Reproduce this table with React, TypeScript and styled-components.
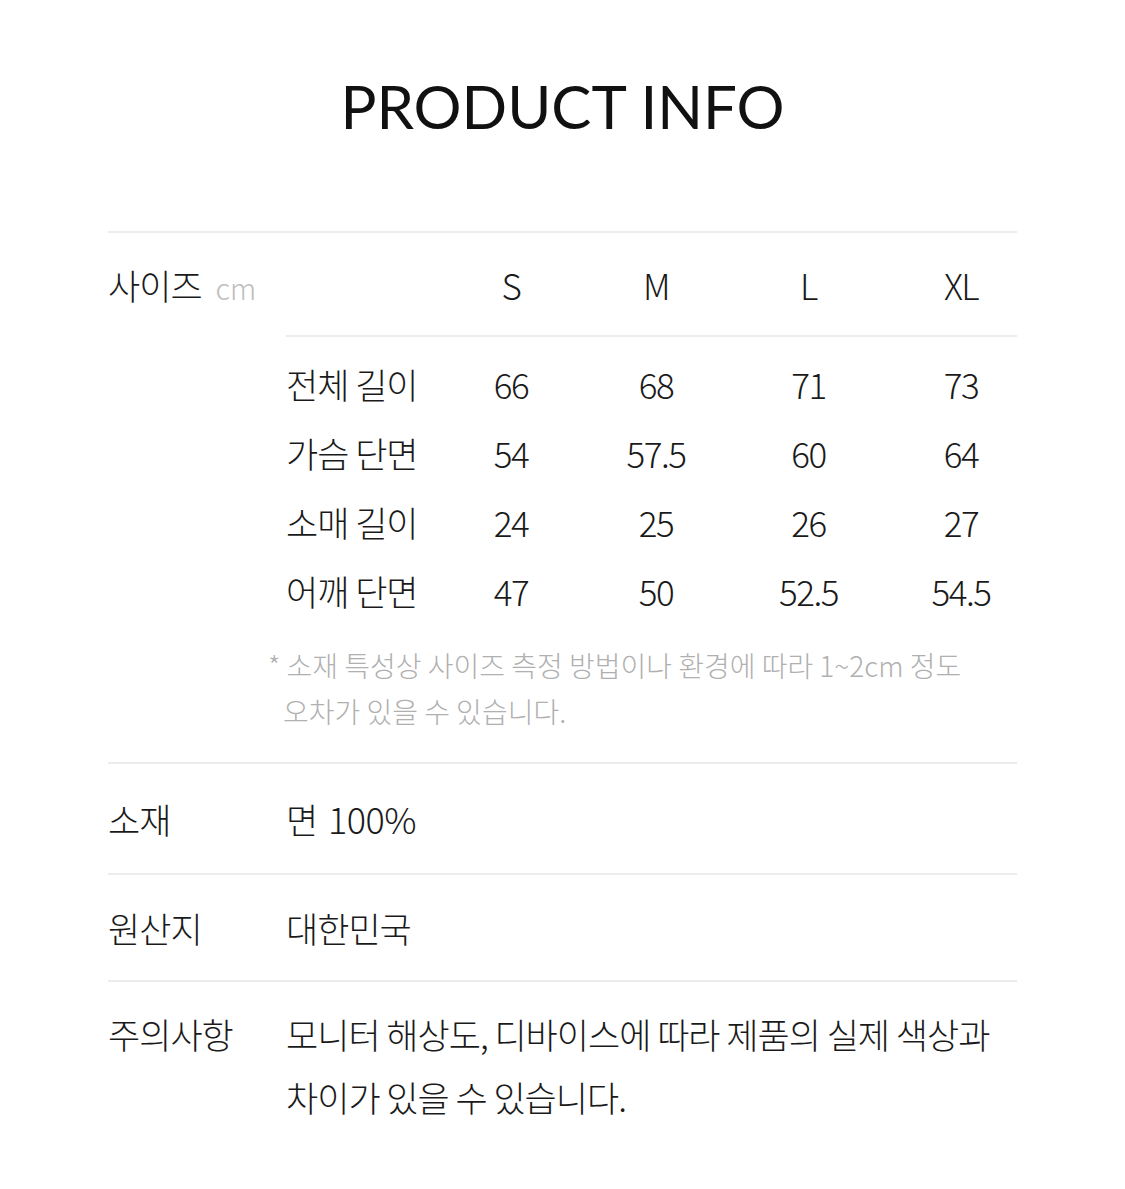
import React from 'react';
import styled, { createGlobalStyle } from 'styled-components';

/* --------------------------------- Globals -------------------------------- */
const GlobalStyle = createGlobalStyle`
  html, body {
    margin: 0;
    padding: 0;
    background: #ffffff;
  }
  body {
    font-family: 'Noto Sans CJK KR', 'Noto Sans', sans-serif;
    color: #1e1e1e;
  }
`;

/* ---------------------------------- Data ---------------------------------- */
const sizes = ['S', 'M', 'L', 'XL'];

const measures: { label: string; values: string[] }[] = [
  { label: '전체 길이', values: ['66', '68', '71', '73'] },
  { label: '가슴 단면', values: ['54', '57.5', '60', '64'] },
  { label: '소매 길이', values: ['24', '25', '26', '27'] },
  { label: '어깨 단면', values: ['47', '50', '52.5', '54.5'] },
];

const App = () => {
  return (
    <>
      <GlobalStyle />
      <Page>
        <Title>PRODUCT INFO</Title>

        <Section>
          <Label $pad={20}>
            사이즈<Unit>cm</Unit>
          </Label>
          <SizeTable>
            <HeadRow>
              <span />
              {sizes.map((s) => (
                <Value key={s}>{s}</Value>
              ))}
            </HeadRow>
            <Body>
              {measures.map((m) => (
                <DataRow key={m.label}>
                  <RowName>{m.label}</RowName>
                  {m.values.map((v, i) => (
                    <Value key={i}>{v}</Value>
                  ))}
                </DataRow>
              ))}
            </Body>
            <Note>
              * 소재 특성상 사이즈 측정 방법이나 환경에 따라 1~2cm 정도
              <br />
              오차가 있을 수 있습니다.
            </Note>
          </SizeTable>
        </Section>

        <Section>
          <Label $pad={23}>소재</Label>
          <Text $pad={23}>
            면 <Num>100%</Num>
          </Text>
        </Section>

        <Section>
          <Label $pad={21}>원산지</Label>
          <Text $pad={21}>대한민국</Text>
        </Section>

        <Section>
          <Label $pad={20}>주의사항</Label>
          <Text $pad={20}>
            모니터 해상도, 디바이스에 따라 제품의 실제 색상과
            <br />
            차이가 있을 수 있습니다.
          </Text>
        </Section>
      </Page>
    </>
  );
};

/* --------------------------------- Styles --------------------------------- */
const Page = styled.main`
  width: 909px;
  margin: 0 auto;
  padding: 75px 0 60px;
`;

const Title = styled.h1`
  margin: 0 0 94px;
  font-family: Lato, 'Open Sans', sans-serif;
  font-weight: 400;
  font-size: 60px;
  line-height: 62px;
  text-align: center;
  color: #111;
`;

const Section = styled.section`
  display: grid;
  grid-template-columns: 178px 1fr;
  align-items: start;
  border-top: 2px solid #ececec;
`;

const Label = styled.div<{ $pad: number }>`
  padding-top: ${(p) => p.$pad}px;
  font-size: 35px;
  font-weight: 300;
  line-height: 63px;
  letter-spacing: -1px;
  color: #1a1a1a;
  white-space: nowrap;
`;

const Unit = styled.span`
  margin-left: 14px;
  font-size: 29px;
  letter-spacing: 0;
  color: #bdbdbd;
`;

const Text = styled.div<{ $pad: number }>`
  padding: ${(p) => p.$pad}px 0;
  font-size: 35px;
  font-weight: 300;
  line-height: 63px;
  letter-spacing: -1px;
  color: #1a1a1a;
  white-space: nowrap;
`;

const Num = styled.span`
  margin-left: 4px;
  font-size: 36px;
  letter-spacing: -0.5px;
`;

const SizeTable = styled.div`
  display: flex;
  flex-direction: column;
  padding-bottom: 28px;
`;

const Cols = styled.div`
  display: grid;
  grid-template-columns: 150px 150px 140px 165px 140px;
  align-items: center;
`;

const HeadRow = styled(Cols)`
  width: 731px;
  padding: 20px 0 19px;
  line-height: 63px;
  border-bottom: 2px solid #ececec;
`;

const Body = styled.div`
  padding-top: 12px;
`;

const DataRow = styled(Cols)`
  height: 69px;
`;

const RowName = styled.span`
  font-size: 35px;
  font-weight: 300;
  letter-spacing: -1px;
  color: #1a1a1a;
  white-space: nowrap;
`;

const Value = styled.span`
  font-size: 35px;
  font-weight: 300;
  letter-spacing: -1.5px;
  text-align: center;
  color: #1a1a1a;
`;

const Note = styled.p`
  margin: 17px 0 0 -3px;
  text-indent: -15px;
  font-size: 28px;
  font-weight: 300;
  line-height: 46px;
  letter-spacing: 0;
  color: #b0b0b0;
  white-space: nowrap;
`;

export default App;
